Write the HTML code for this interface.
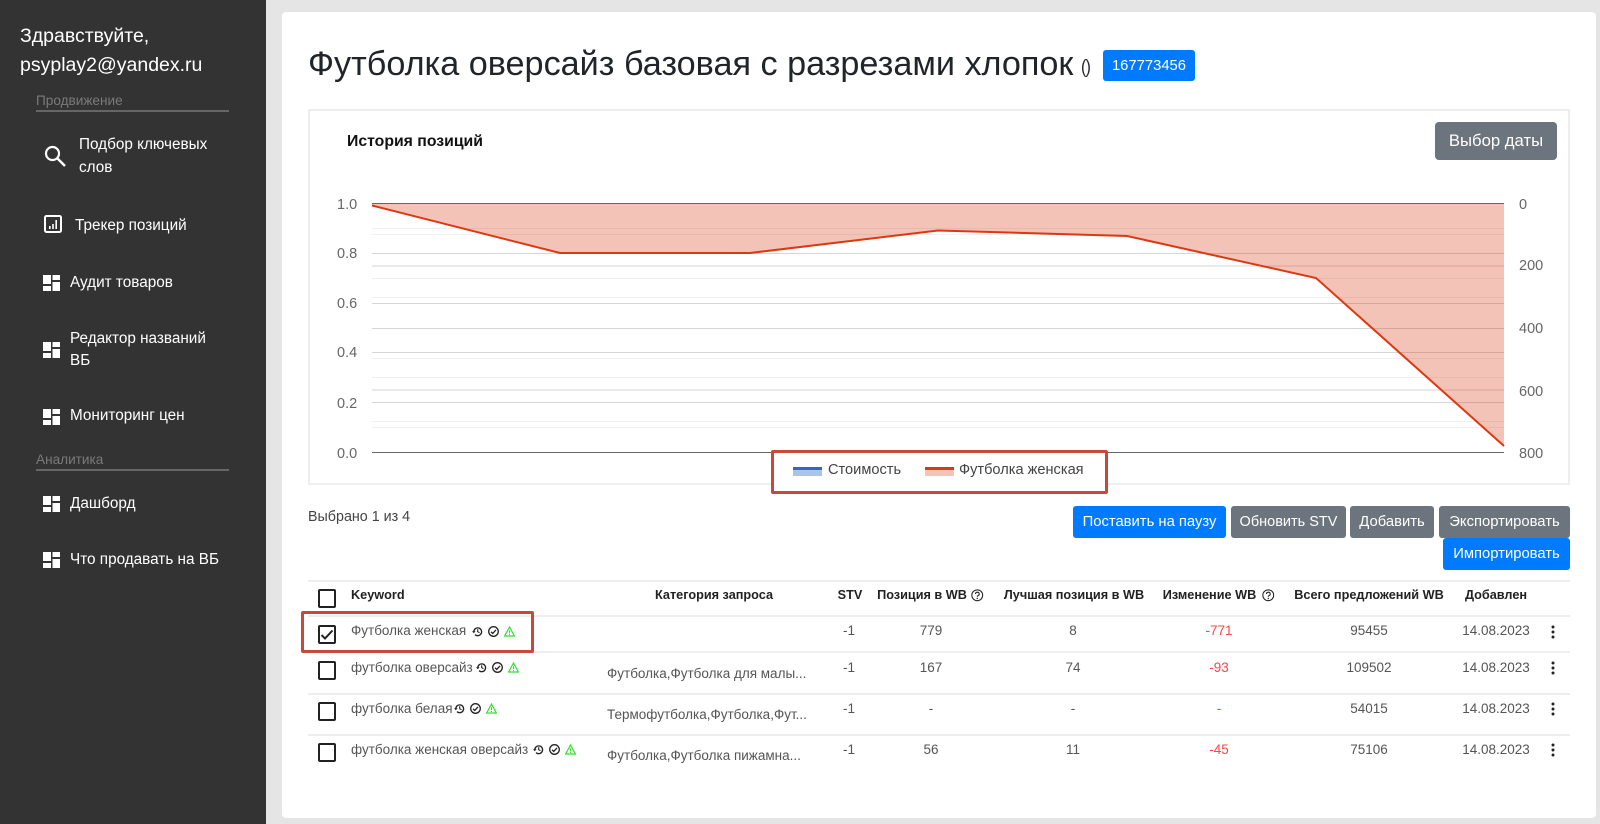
<!DOCTYPE html>
<html lang="ru"><head><meta charset="utf-8"><title>Трекер позиций</title>
<style>
html,body{margin:0;padding:0;width:1600px;height:824px;overflow:hidden;background:#e5e5e5;font-family:"Liberation Sans",sans-serif}
.a,.a *{box-sizing:border-box}
.a{position:absolute;white-space:nowrap;line-height:1}
.w{color:#fff;font-size:15.3px}
.sec{color:#7a7a7a;font-size:13.6px;left:36px}
.hr{left:36px;width:193px;height:2px;background:#666}
.btn{color:#fff;font-size:14.8px;border-radius:3px;display:flex;align-items:center;justify-content:center;height:32px;padding-top:1px}
.g{background:#6c757d}.b{background:#007bff}
.th{font-size:12.7px;font-weight:bold;color:#222;transform:translateX(-50%)}
.td{font-size:13.5px;color:#555;transform:translateX(-50%)}
.red{color:#f44}
.kw{font-size:13.5px;color:#555;left:351px}
.cat{font-size:13.5px;color:#555;left:607px}
.l{height:2px;background:#eee;left:308px;width:1262px}
.cb{left:318px;width:18px;height:19px;border:2px solid #222;border-radius:2px;background:#fff}
svg{position:absolute;overflow:visible}
.ax{font-size:14.5px;color:#666}
</style></head><body>
<svg width="0" height="0" style="position:absolute"><defs>
<symbol id="dash" viewBox="0 0 17 16"><path d="M0 0h8v9H0zM0 11h8v5H0zM9.5 0H17v5H9.5zM9.5 7H17v9H9.5z" fill="#fff"/></symbol>
<symbol id="hist" viewBox="0 0 11 11"><path d="M1.8 5.5A3.9 3.9 0 1 1 3 8.6" fill="none" stroke="#222" stroke-width="1.3"/><path d="M0 5.2h3.6L1.8 7.3z" fill="#222"/><path d="M5.7 3.2v2.5l1.8 1" fill="none" stroke="#222" stroke-width="1.1"/></symbol>
<symbol id="chk" viewBox="0 0 11 11"><circle cx="5.5" cy="5.5" r="4.8" fill="none" stroke="#222" stroke-width="1.3"/><path d="M3 5.8l1.7 1.6L8 3.9" fill="none" stroke="#222" stroke-width="1.3"/></symbol>
<symbol id="tri" viewBox="0 0 11 11"><path d="M5.5 1L10.4 10H.6z" fill="none" stroke="#2fe02f" stroke-width="1.2"/><path d="M5.5 4.2v3M5.5 8v1" stroke="#2fe02f" stroke-width="1"/></symbol>
<symbol id="q" viewBox="0 0 12 12"><circle cx="6" cy="6" r="5.2" fill="none" stroke="#222" stroke-width="1"/><path d="M4.3 4.8A1.8 1.7 0 1 1 6.6 6.4C6 6.7 6 7 6 7.6" fill="none" stroke="#222" stroke-width="1"/><circle cx="6" cy="9.1" r=".7" fill="#222"/></symbol>
<symbol id="keb" viewBox="0 0 4 14"><circle cx="2" cy="2" r="1.5" fill="#222"/><circle cx="2" cy="7" r="1.5" fill="#222"/><circle cx="2" cy="12" r="1.5" fill="#222"/></symbol>
</defs></svg>

<div class="a" style="left:0;top:0;width:266px;height:824px;background:#333"></div>
<div class="a" style="left:20px;top:27px;font-size:19.5px;color:#fff">Здравствуйте,</div>
<div class="a" style="left:20px;top:56px;font-size:19.5px;color:#fff">psyplay2@yandex.ru</div>
<div class="a sec" style="top:94px">Продвижение</div><div class="a hr" style="top:110px"></div>
<svg style="left:44px;top:145px" width="22" height="22" viewBox="0 0 22 22"><circle cx="8.5" cy="8.5" r="6.5" fill="none" stroke="#fff" stroke-width="2.2"/><path d="M13.5 13.5L21 21" stroke="#fff" stroke-width="2.4"/></svg>
<div class="a w" style="left:79px;top:137px">Подбор ключевых</div>
<div class="a w" style="left:79px;top:160px">слов</div>
<svg style="left:44px;top:215px" width="18" height="18" viewBox="0 0 18 18"><rect x="1" y="1" width="16" height="16" rx="1.5" fill="none" stroke="#fff" stroke-width="2"/><path d="M5 14v-3h1.6v3zM8.2 14V9h1.6v5zM11.4 14V5H13v9z" fill="#fff"/></svg>
<div class="a w" style="left:75px;top:218px">Трекер позиций</div>
<svg style="left:43px;top:275px" width="17" height="16"><use href="#dash"/></svg>
<div class="a w" style="left:70px;top:275px">Аудит товаров</div>
<svg style="left:43px;top:342px" width="17" height="16"><use href="#dash"/></svg>
<div class="a w" style="left:70px;top:331px">Редактор названий</div>
<div class="a w" style="left:70px;top:353px">ВБ</div>
<svg style="left:43px;top:409px" width="17" height="16"><use href="#dash"/></svg>
<div class="a w" style="left:70px;top:408px">Мониторинг цен</div>
<div class="a sec" style="top:453px">Аналитика</div><div class="a hr" style="top:469px"></div>
<svg style="left:43px;top:496px" width="17" height="16"><use href="#dash"/></svg>
<div class="a w" style="left:70px;top:496px">Дашборд</div>
<svg style="left:43px;top:552px" width="17" height="16"><use href="#dash"/></svg>
<div class="a w" style="left:70px;top:552px">Что продавать на ВБ</div>

<div class="a" style="left:282px;top:12px;width:1314px;height:806px;background:#fff;border-radius:4px"></div>
<div class="a" style="left:308px;top:47px;font-size:34.2px;color:#212529">Футболка оверсайз базовая с разрезами хлопок</div>
<div class="a" style="left:1081px;top:58px;font-size:19px;letter-spacing:-1px;transform-origin:left;transform:scaleX(.85);color:#212529">()</div>
<div class="a btn b" style="left:1103px;top:50px;width:92px;height:31px;font-size:14.8px">167773456</div>

<div class="a" style="left:308px;top:109px;width:1262px;height:376px;border:2px solid #eee"></div>
<div class="a" style="left:347px;top:134px;font-size:15.8px;font-weight:bold;color:#111">История позиций</div>
<div class="a btn g" style="left:1435px;top:122px;width:122px;height:38px;font-size:16.7px;border-radius:4px">Выбор даты</div>

<svg style="left:0;top:0" width="1600" height="824">
<g stroke="#efefef" stroke-width="1" shape-rendering="crispEdges">
<path d="M372 228.5H1504M372 234.5H1504M372 278.5H1504M372 297.5H1504M372 358.5H1504M372 377.5H1504M372 421.5H1504M372 427.5H1504"/></g>
<g stroke="#d6d6d6" stroke-width="1" shape-rendering="crispEdges">
<path d="M372 253.5H1504M372 266H1504M372 303.5H1504M372 328.5H1504M372 352.5H1504M372 390H1504M372 402.5H1504"/></g>
<path d="M372 205.5L560 253L750 253L938 230.5L1127 236L1316 278L1504 446V203H372Z" fill="#dc3912" fill-opacity=".3"/>
<path d="M372 203.5H1504M372 452.5H1504" stroke="#666" stroke-width="1" shape-rendering="crispEdges"/>
<path d="M372 205.5L560 253L750 253L938 230.5L1127 236L1316 278L1504 446" fill="none" stroke="#dc3912" stroke-width="2"/>
</svg>
<div class="a ax" style="left:337px;top:198px">1.0</div>
<div class="a ax" style="left:337px;top:247px">0.8</div>
<div class="a ax" style="left:337px;top:297px">0.6</div>
<div class="a ax" style="left:337px;top:346px">0.4</div>
<div class="a ax" style="left:337px;top:397px">0.2</div>
<div class="a ax" style="left:337px;top:447px">0.0</div>
<div class="a ax" style="left:1519px;top:198px">0</div>
<div class="a ax" style="left:1519px;top:259px">200</div>
<div class="a ax" style="left:1519px;top:322px">400</div>
<div class="a ax" style="left:1519px;top:385px">600</div>
<div class="a ax" style="left:1519px;top:447px">800</div>

<div class="a" style="left:771px;top:450px;width:337px;height:44px;border:3px solid #c9483c;border-radius:2px;background:#fff"></div>
<div class="a" style="left:793px;top:467px;width:29px;height:9px;background:#adc2eb;border-top:3px solid #3366cc"></div>
<div class="a" style="left:828px;top:463px;font-size:14.6px;color:#444">Стоимость</div>
<div class="a" style="left:925px;top:467px;width:29px;height:9px;background:#f5c4b8;border-top:3px solid #dc3912"></div>
<div class="a" style="left:959px;top:463px;font-size:14.6px;color:#444">Футболка женская</div>

<div class="a" style="left:308px;top:510px;font-size:14.3px;color:#444">Выбрано 1 из 4</div>
<div class="a btn b" style="left:1073px;top:506px;width:153px">Поставить на паузу</div>
<div class="a btn g" style="left:1231px;top:506px;width:115px;font-size:14.5px">Обновить STV</div>
<div class="a btn g" style="left:1350px;top:506px;width:84px">Добавить</div>
<div class="a btn g" style="left:1439px;top:506px;width:131px">Экспортировать</div>
<div class="a btn b" style="left:1443px;top:538px;width:127px">Импортировать</div>

<div class="a l" style="top:580px"></div>
<div class="a l" style="top:615px;height:2px"></div>
<div class="a l" style="top:651px"></div>
<div class="a l" style="top:693px"></div>
<div class="a l" style="top:734px"></div>

<div class="a cb" style="top:589px"></div>
<div class="a" style="left:351px;top:589px;font-size:12.7px;font-weight:bold;color:#222">Keyword</div>
<div class="a th" style="left:714px;top:589px">Категория запроса</div>
<div class="a th" style="left:850px;top:589px">STV</div>
<div class="a th" style="left:922px;top:589px">Позиция в WB</div>
<svg style="left:971px;top:589px" width="12.5" height="12.5"><use href="#q"/></svg>
<div class="a th" style="left:1074px;top:589px">Лучшая позиция в WB</div>
<div class="a th" style="left:1209.5px;top:589px">Изменение WB</div>
<svg style="left:1262px;top:589px" width="12.5" height="12.5"><use href="#q"/></svg>
<div class="a th" style="left:1369px;top:589px">Всего предложений WB</div>
<div class="a th" style="left:1496px;top:589px">Добавлен</div>

<div class="a" style="left:301px;top:611px;width:233px;height:42px;border:3px solid #c9483c;border-radius:2px"></div>
<div class="a cb" style="top:625px"></div>
<svg style="left:320px;top:628px" width="14" height="13" viewBox="0 0 14 13"><path d="M1.5 7l3.5 3.5L12.5 2.5" fill="none" stroke="#222" stroke-width="2"/></svg>
<div class="a kw" style="top:624px">Футболка женская</div>
<svg style="left:472px;top:626px" width="11" height="11"><use href="#hist"/></svg>
<svg style="left:488px;top:626px" width="11" height="11"><use href="#chk"/></svg>
<svg style="left:504px;top:626px" width="11" height="11"><use href="#tri"/></svg>
<div class="a td" style="left:849px;top:624px">-1</div>
<div class="a td" style="left:931px;top:624px">779</div>
<div class="a td" style="left:1073px;top:624px">8</div>
<div class="a td red" style="left:1219px;top:624px">-771</div>
<div class="a td" style="left:1369px;top:624px">95455</div>
<div class="a td" style="left:1496px;top:624px">14.08.2023</div>
<svg style="left:1551px;top:625px" width="4" height="14"><use href="#keb"/></svg>

<div class="a cb" style="top:661px"></div>
<div class="a kw" style="top:661px">футболка оверсайз</div>
<svg style="left:476px;top:662px" width="11" height="11"><use href="#hist"/></svg>
<svg style="left:492px;top:662px" width="11" height="11"><use href="#chk"/></svg>
<svg style="left:508px;top:662px" width="11" height="11"><use href="#tri"/></svg>
<div class="a cat" style="top:667px">Футболка,Футболка для малы...</div>
<div class="a td" style="left:849px;top:661px">-1</div>
<div class="a td" style="left:931px;top:661px">167</div>
<div class="a td" style="left:1073px;top:661px">74</div>
<div class="a td red" style="left:1219px;top:661px">-93</div>
<div class="a td" style="left:1369px;top:661px">109502</div>
<div class="a td" style="left:1496px;top:661px">14.08.2023</div>
<svg style="left:1551px;top:661px" width="4" height="14"><use href="#keb"/></svg>

<div class="a cb" style="top:702px"></div>
<div class="a kw" style="top:702px">футболка белая</div>
<svg style="left:454px;top:703px" width="11" height="11"><use href="#hist"/></svg>
<svg style="left:470px;top:703px" width="11" height="11"><use href="#chk"/></svg>
<svg style="left:486px;top:703px" width="11" height="11"><use href="#tri"/></svg>
<div class="a cat" style="top:708px">Термофутболка,Футболка,Фут...</div>
<div class="a td" style="left:849px;top:702px">-1</div>
<div class="a td" style="left:931px;top:702px">-</div>
<div class="a td" style="left:1073px;top:702px">-</div>
<div class="a td red" style="left:1219px;top:702px">-</div>
<div class="a td" style="left:1369px;top:702px">54015</div>
<div class="a td" style="left:1496px;top:702px">14.08.2023</div>
<svg style="left:1551px;top:702px" width="4" height="14"><use href="#keb"/></svg>

<div class="a cb" style="top:743px"></div>
<div class="a kw" style="top:743px">футболка женская оверсайз</div>
<svg style="left:533px;top:744px" width="11" height="11"><use href="#hist"/></svg>
<svg style="left:549px;top:744px" width="11" height="11"><use href="#chk"/></svg>
<svg style="left:565px;top:744px" width="11" height="11"><use href="#tri"/></svg>
<div class="a cat" style="top:749px">Футболка,Футболка пижамна...</div>
<div class="a td" style="left:849px;top:743px">-1</div>
<div class="a td" style="left:931px;top:743px">56</div>
<div class="a td" style="left:1073px;top:743px">11</div>
<div class="a td red" style="left:1219px;top:743px">-45</div>
<div class="a td" style="left:1369px;top:743px">75106</div>
<div class="a td" style="left:1496px;top:743px">14.08.2023</div>
<svg style="left:1551px;top:743px" width="4" height="14"><use href="#keb"/></svg>
</body></html>
